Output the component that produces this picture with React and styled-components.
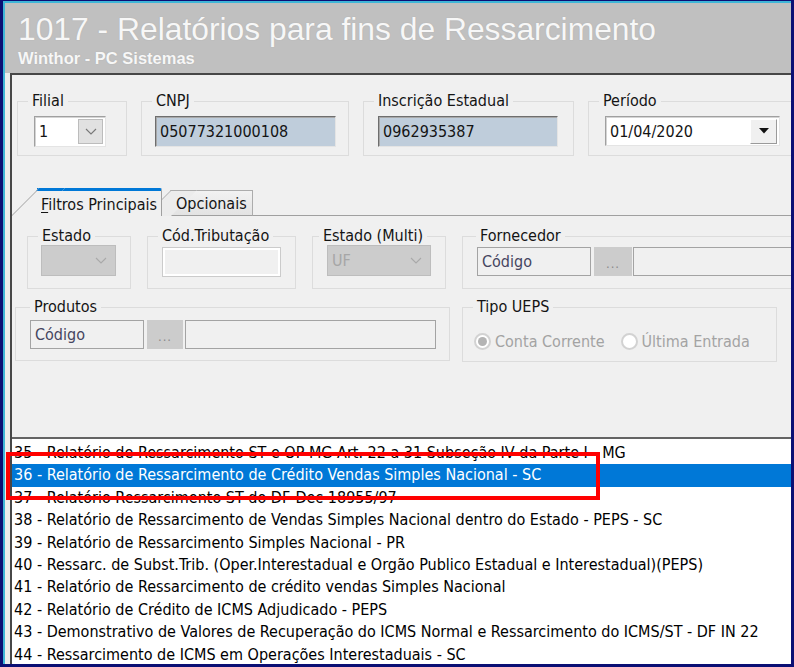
import React from "react"
import styled, { createGlobalStyle } from "styled-components"

const UI = `"DejaVu Sans Condensed", "DejaVu Sans", sans-serif`

const GlobalStyle = createGlobalStyle`
  html, body {
    margin: 0;
    padding: 0;
    background: #0b0f74;
  }
  #root {
    width: 794px;
    height: 667px;
  }
`

const Window = styled.div`
  position: relative;
  box-sizing: border-box;
  width: 794px;
  height: 667px;
  border: 3px solid #0b0f74;
  border-top-width: 1px;
  overflow: hidden;
  display: flex;
  flex-direction: column;
  font-family: ${UI};
  font-stretch: condensed;
`

const Inner = styled.div`
  flex: 1;
  min-height: 0;
  display: flex;
  flex-direction: column;
  border-left: 2px solid #3fb6d8;
  border-top: 2px solid #3fb6d8;
  background: #c0c0c0;
`

const Header = styled.header`
  box-sizing: border-box;
  height: 70px;
  padding: 10px 0 0 13px;
  color: #f7f7f7;
  font-family: "Liberation Sans", Arial, sans-serif;
`

const Title = styled.h1`
  margin: 0;
  font-size: 31.8px;
  line-height: 32px;
  font-weight: normal;
  text-shadow: 0 0 1px rgba(120, 120, 120, 0.35);
`

const Subtitle = styled.div`
  margin-top: 5px;
  font-size: 16.5px;
  line-height: 16.5px;
  font-weight: bold;
  text-shadow: 0 0 1px rgba(120, 120, 120, 0.35);
`

const Body = styled.div`
  flex: 1;
  min-height: 0;
  display: flex;
`

const Gutter = styled.div`
  width: 5px;
  background: #ececec;
`

const Panel = styled.main`
  flex: 1;
  min-width: 0;
  display: flex;
  flex-direction: column;
  overflow: hidden;
  background: #f0f0f0;
  border-top: 2px solid #474747;
  border-left: 2px solid #474747;
  color: #141414;
  font-size: 16px;
`

const Row = styled.div`
  display: flex;
  flex-shrink: 0;
  gap: ${(p) => p.$gap}px;
  padding: ${(p) => p.$pt || 0}px 0 0 ${(p) => p.$pl}px;
`

const GroupBox = styled.section`
  flex-shrink: 0;
  box-sizing: border-box;
  width: ${(p) => p.$w}px;
  height: ${(p) => p.$h}px;
  border: 1px solid #dcdcdc;
  display: flex;
  flex-direction: column;
`

const Legend = styled.span`
  display: block;
  width: fit-content;
  margin: -10px 0 0 ${(p) => p.$ml}px;
  padding: 0 4px;
  background: #f0f0f0;
  line-height: 18px;
  white-space: nowrap;
`

const Content = styled.div`
  display: flex;
  align-items: center;
  margin: ${(p) => p.$mt}px 0 0 ${(p) => p.$ml}px;
`

const Edit = styled.div`
  box-sizing: border-box;
  flex-shrink: 0;
  display: flex;
  align-items: center;
  width: ${(p) => p.$w}px;
  height: ${(p) => p.$h}px;
  padding: 0 ${(p) => (p.$combo ? 2 : 4)}px 0 4px;
  font-size: 16px;
  white-space: nowrap;
  ${(p) =>
    p.$kind === "readonly" &&
    `
    background: #bfcddb;
    border: 1px solid;
    border-color: #6e6e6e #e4e4e4 #e4e4e4 #6e6e6e;
    box-shadow: inset 1px 1px 0 #a8a8a8;
  `}
  ${(p) =>
    p.$kind === "white" &&
    `
    background: #ffffff;
    border: 1px solid;
    border-color: #a0a0a0 #e4e4e4 #e4e4e4 #a0a0a0;
    box-shadow: inset 1px 1px 0 #d4d4d4;
  `}
  ${(p) =>
    p.$kind === "disabled" &&
    `
    background: #cccccc;
    border: 1px solid #bdbdbd;
    color: #a6a6a6;
  `}
  ${(p) =>
    p.$kind === "empty" &&
    `
    background: #f0f0f0;
    border: 1px solid #cbcbcb;
    box-shadow: inset 0 0 0 2px #ffffff;
  `}
  ${(p) =>
    p.$kind === "lookup" &&
    `
    background: #f0f0f0;
    border: 1px solid #a3a3a3;
    color: #454560;
  `}
`

const Value = styled.span`
  flex: 1;
`

const DropButton = styled.span`
  box-sizing: border-box;
  display: flex;
  align-items: center;
  justify-content: center;
  width: ${(p) => p.$w}px;
  height: ${(p) => p.$h}px;
  ${(p) =>
    p.$variant === "flat" &&
    `
    background: #e1e1e1;
    border: 1px solid #bcbcbc;
  `}
  ${(p) =>
    p.$variant === "raised" &&
    `
    background: #f0f0f0;
    border: 1px solid;
    border-color: #ffffff #9a9a9a #9a9a9a #ffffff;
  `}
`

const EllipsisButton = styled.span`
  box-sizing: border-box;
  flex-shrink: 0;
  display: flex;
  align-items: flex-end;
  justify-content: center;
  width: ${(p) => p.$w}px;
  height: ${(p) => p.$h}px;
  margin: 0 ${(p) => p.$mr}px 0 ${(p) => p.$ml}px;
  padding-bottom: 6px;
  background: #cccccc;
  color: #8a8a8a;
  font-size: 13px;
  line-height: 13px;
  letter-spacing: 1px;
`

const Chevron = ({ color = "#777" }) => (
  <svg width="12" height="7" viewBox="0 0 12 7">
    <polyline points="1,1 6,6 11,1" fill="none" stroke={color} strokeWidth="1.1" />
  </svg>
)

const Triangle = () => (
  <svg width="10" height="6" viewBox="0 0 10 6">
    <polygon points="0,0 10,0 5,5.5" fill="#111" />
  </svg>
)

const TabArea = styled.div`
  flex-shrink: 0;
  margin-top: 32px;
`

const TabStrip = styled.div`
  display: flex;
  align-items: flex-end;
  height: 28px;
  padding-left: 25px;
`

const Tab = styled.div`
  position: relative;
  box-sizing: border-box;
  display: flex;
  align-items: center;
  white-space: nowrap;
  ${(p) =>
    p.$active
      ? `
    z-index: 2;
    width: 125px;
    height: 28px;
    padding: 2px 0 0 4px;
    background: #f0f0f0;
    border-top: 3px solid #0078d7;
    border-right: 1px solid #a0a0a0;
    border-top-right-radius: 2px;
  `
      : `
    z-index: 1;
    width: 83px;
    height: 26px;
    margin-left: 8px;
    padding: 1px 0 0 6px;
    background: linear-gradient(#f2f2f2, #e3e3e3);
    border-top: 1px solid #acacac;
    border-right: 1px solid #acacac;
    border-bottom: 1px solid #a0a0a0;
  `}

  &::before {
    content: "";
    position: absolute;
    top: ${(p) => (p.$active ? -3 : -1)}px;
    bottom: ${(p) => (p.$active ? 0 : -1)}px;
    left: ${(p) => (p.$active ? -26 : -25)}px;
    width: 26px;
    box-sizing: border-box;
    background: ${(p) => (p.$active ? "#f0f0f0" : "#ececec")};
    border-left: 1px solid ${(p) => (p.$active ? "#a0a0a0" : "#acacac")};
    border-top: ${(p) => (p.$active ? "3px solid #0078d7" : "1px solid #acacac")};
    transform: skewX(-45deg);
    transform-origin: bottom left;
    z-index: -1;
  }
`

const Accel = styled.u`
  text-decoration-thickness: 1px;
  text-underline-offset: 2px;
`

const TabRule = styled.div`
  flex: 1;
  height: 28px;
  box-sizing: border-box;
  border-bottom: 1px solid #a0a0a0;
`

const TabPage = styled.div`
  box-sizing: border-box;
  height: 221px;
  padding-top: 20px;
`

const RadioGroup = styled.div`
  display: flex;
  align-items: center;
  color: #a3a3a3;
  font-size: 16px;
`

const RadioOption = styled.label`
  display: flex;
  align-items: center;
  gap: 4px;
  margin-right: ${(p) => p.$mr || 0}px;
`

const RadioDot = styled.span`
  box-sizing: border-box;
  width: 17px;
  height: 17px;
  border-radius: 50%;
  border: 2px solid #d2d2d2;
  background: #ffffff;
  display: flex;
  align-items: center;
  justify-content: center;

  &::after {
    content: "";
    display: ${(p) => (p.$checked ? "block" : "none")};
    width: 9px;
    height: 9px;
    border-radius: 50%;
    background: #b4b4b4;
  }
`

const List = styled.ul`
  flex: 1;
  margin: 0;
  padding: 3px 0 0;
  list-style: none;
  background: #ffffff;
  border-top: 2px solid #646464;
  color: #000;
  font-size: 16px;
`

const Item = styled.li`
  height: 22.4px;
  line-height: 22.4px;
  padding-left: 2px;
  white-space: nowrap;
  background: ${(p) => (p.$selected ? "#0078d7" : "transparent")};
  color: ${(p) => (p.$selected ? "#ffffff" : "#000000")};
`

const Highlight = styled.div`
  position: absolute;
  left: 3px;
  top: 451px;
  width: 594px;
  height: 48px;
  box-sizing: border-box;
  border: 4px solid #ff0000;
  pointer-events: none;
`

const reports = [
  "35 - Relatório de Ressarcimento ST e OP MG Art. 22 a 31 Subseção IV da Parte I - MG",
  "36 - Relatório de Ressarcimento de Crédito Vendas Simples Nacional - SC",
  "37 - Relatório Ressarcimento ST do DF-Dec 18955/97",
  "38 - Relatório de Ressarcimento de Vendas Simples Nacional dentro do Estado - PEPS - SC",
  "39 - Relatório de Ressarcimento Simples Nacional - PR",
  "40 - Ressarc. de Subst.Trib. (Oper.Interestadual e Orgão Publico Estadual e Interestadual)(PEPS)",
  "41 - Relatório de Ressarcimento de crédito vendas Simples Nacional",
  "42 - Relatório de Crédito de ICMS Adjudicado - PEPS",
  "43 - Demonstrativo de Valores de Recuperação do ICMS Normal e Ressarcimento do ICMS/ST - DF IN 22",
  "44 - Ressarcimento de ICMS em Operações Interestaduais - SC",
]

export default function App() {
  return (
    <Window>
      <GlobalStyle />
      <Inner>
        <Header>
          <Title>1017 - Relatórios para fins de Ressarcimento</Title>
          <Subtitle>Winthor - PC Sistemas</Subtitle>
        </Header>
        <Body>
          <Gutter />
          <Panel>
            <Row $pt={26} $pl={5} $gap={14}>
              <GroupBox $w={110} $h={55}>
                <Legend $ml={10}>Filial</Legend>
                <Content $mt={6} $ml={16}>
                  <Edit $kind="white" $w={72} $h={31} $combo>
                    <Value>1</Value>
                    <DropButton $variant="flat" $w={25} $h={25}>
                      <Chevron />
                    </DropButton>
                  </Edit>
                </Content>
              </GroupBox>
              <GroupBox $w={208} $h={55}>
                <Legend $ml={10}>CNPJ</Legend>
                <Content $mt={6} $ml={13}>
                  <Edit $kind="readonly" $w={181} $h={31}>
                    05077321000108
                  </Edit>
                </Content>
              </GroupBox>
              <GroupBox $w={211} $h={55}>
                <Legend $ml={10}>Inscrição Estadual</Legend>
                <Content $mt={6} $ml={14}>
                  <Edit $kind="readonly" $w={180} $h={31}>
                    0962935387
                  </Edit>
                </Content>
              </GroupBox>
              <GroupBox $w={220} $h={55}>
                <Legend $ml={10}>Período</Legend>
                <Content $mt={6} $ml={16}>
                  <Edit $kind="white" $w={175} $h={30} $combo>
                    <Value>01/04/2020</Value>
                    <DropButton $variant="raised" $w={27} $h={25}>
                      <Triangle />
                    </DropButton>
                  </Edit>
                </Content>
              </GroupBox>
            </Row>

            <TabArea>
              <TabStrip>
                <Tab $active>
                  <span>
                    <Accel>F</Accel>iltros Principais
                  </span>
                </Tab>
                <Tab>Opcionais</Tab>
                <TabRule />
              </TabStrip>
              <TabPage>
                <Row $pl={15} $gap={16}>
                  <GroupBox $w={104} $h={53}>
                    <Legend $ml={10}>Estado</Legend>
                    <Content $mt={0} $ml={13}>
                      <Edit $kind="disabled" $w={75} $h={31} $combo>
                        <Value />
                        <DropButton $w={25} $h={25}>
                          <Chevron color="#a9a9a9" />
                        </DropButton>
                      </Edit>
                    </Content>
                  </GroupBox>
                  <GroupBox $w={149} $h={53}>
                    <Legend $ml={10}>Cód.Tributação</Legend>
                    <Content $mt={2} $ml={14}>
                      <Edit $kind="empty" $w={119} $h={30} />
                    </Content>
                  </GroupBox>
                  <GroupBox $w={134} $h={53}>
                    <Legend $ml={6}>Estado (Multi)</Legend>
                    <Content $mt={0} $ml={14}>
                      <Edit $kind="disabled" $w={104} $h={31} $combo>
                        <Value>UF</Value>
                        <DropButton $w={25} $h={25}>
                          <Chevron color="#a9a9a9" />
                        </DropButton>
                      </Edit>
                    </Content>
                  </GroupBox>
                  <GroupBox $w={360} $h={53}>
                    <Legend $ml={13}>Fornecedor</Legend>
                    <Content $mt={2} $ml={14}>
                      <Edit $kind="lookup" $w={114} $h={29}>
                        Código
                      </Edit>
                      <EllipsisButton $w={38} $h={29} $ml={3} $mr={1}>
                        ...
                      </EllipsisButton>
                      <Edit $kind="lookup" $w={200} $h={29} />
                    </Content>
                  </GroupBox>
                </Row>

                <Row $pt={18} $pl={3} $gap={12}>
                  <GroupBox $w={435} $h={54}>
                    <Legend $ml={14}>Produtos</Legend>
                    <Content $mt={4} $ml={14}>
                      <Edit $kind="lookup" $w={114} $h={29}>
                        Código
                      </Edit>
                      <EllipsisButton $w={36} $h={29} $ml={3} $mr={2}>
                        ...
                      </EllipsisButton>
                      <Edit $kind="lookup" $w={251} $h={29} />
                    </Content>
                  </GroupBox>
                  <GroupBox $w={315} $h={55}>
                    <Legend $ml={10}>Tipo UEPS</Legend>
                    <Content $mt={16} $ml={11}>
                      <RadioGroup>
                        <RadioOption $mr={16}>
                          <RadioDot $checked />
                          Conta Corrente
                        </RadioOption>
                        <RadioOption>
                          <RadioDot />
                          Última Entrada
                        </RadioOption>
                      </RadioGroup>
                    </Content>
                  </GroupBox>
                </Row>
              </TabPage>
            </TabArea>

            <List>
              {reports.map((r, i) => (
                <Item key={r} $selected={i === 1}>
                  {r}
                </Item>
              ))}
            </List>
          </Panel>
        </Body>
      </Inner>
      <Highlight />
    </Window>
  )
}
